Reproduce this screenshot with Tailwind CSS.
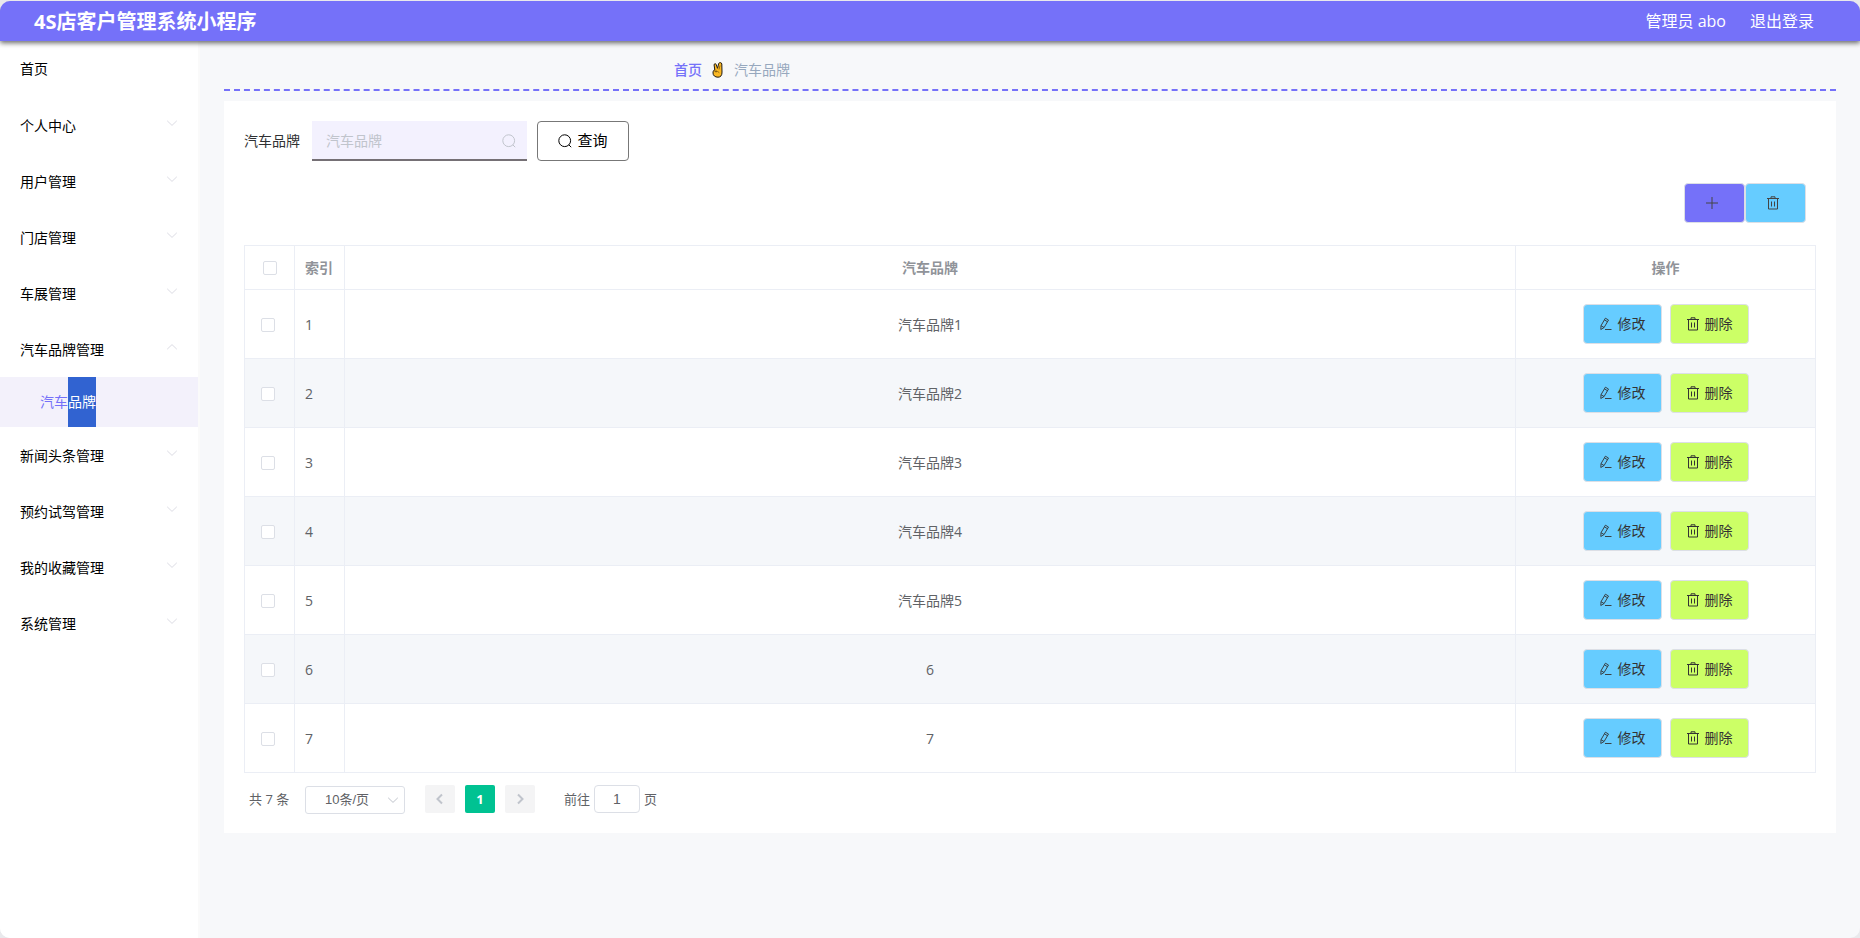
<!DOCTYPE html>
<html lang="zh-CN">
<head>
<meta charset="utf-8">
<title>4S店客户管理系统小程序</title>
<script src="https://cdn.jsdelivr.net/npm/@tailwindcss/browser@4"></script>
</head>
<body class="bg-[#e9e9ec] pt-px font-['Open_Sans','Noto_Sans_CJK_SC',sans-serif] text-sm text-[#606266]">
<svg class="hidden" aria-hidden="true">
  <symbol id="i-down" viewBox="0 0 14 14"><path d="M2.2 4.8 7 9.4l4.8-4.6" fill="none" stroke="currentColor"/></symbol>
  <symbol id="i-up" viewBox="0 0 14 14"><path d="M2.2 9.2 7 4.6l4.8 4.6" fill="none" stroke="currentColor"/></symbol>
  <symbol id="i-search" viewBox="0 0 14 14"><circle cx="6.700" cy="6.700" r="5.900" fill="none" stroke="currentColor"/><path d="m10.800 10.800 2.400 2.400" fill="none" stroke="currentColor"/></symbol>
  <symbol id="i-plus" viewBox="0 0 14 14"><path d="M7 1v12M1 7h12" fill="none" stroke="currentColor"/></symbol>
  <symbol id="i-trash" viewBox="0 0 14 14"><path d="M1 2.500h12M2.500 2.500v10.500h9v-10.500M5 2.500v-1.700h4v1.700M5.500 5.500v5M8.500 5.500v5" fill="none" stroke="currentColor"/></symbol>
  <symbol id="i-edit" viewBox="0 0 14 14"><path d="M6 12.500h6.500M1.800 12.500 2 8.700 6.400 1.200 9.500 3 5.100 10.500ZM2 8.700 5.100 10.500M5.400 2.900l3.100 1.800" fill="none" stroke="currentColor" stroke-width=".9"/></symbol>
</svg>

<div class="flex min-h-[calc(100vh-1px)] flex-col overflow-hidden rounded-[10px] bg-[#f7f8fa]">
  <header class="z-10 flex h-10 shrink-0 items-center justify-between bg-[#7571f9] pr-[46px] pl-[34px] text-white shadow-[0_2px_5px_rgba(0,0,0,0.6)]">
    <h1 class="pt-0.5 text-xl font-bold">4S店客户管理系统小程序</h1>
    <div class="flex gap-6 text-base leading-10">
      <span>管理员 abo</span>
      <a href="#">退出登录</a>
    </div>
  </header>

  <div class="flex flex-1">
    <nav class="w-[200px] shrink-0 border-r-2 border-[#fafafa] bg-white text-black" aria-label="主菜单">
      <a href="#" class="flex h-14 items-center px-5">首页</a>
      <ul id="menu"></ul>
    </nav>

    <main class="min-w-0 flex-1 px-6">
      <nav class="flex h-[50px] items-center border-b-2 border-dashed border-[#7571f9] pt-2.5 pl-[450px]" aria-label="面包屑">
        <a href="#" class="font-medium text-[#7571f9]">首页</a>
        <svg class="mx-2 size-4" viewBox="0 0 16 16" aria-hidden="true">
          <path d="M4.800 8 4.100 3C4 1.500 5.800 1.200 6.200 2.500L7.500 6.300 8.700 1.500C9.100.2 11.700.3 11.800 2L12 10C12.200 13.500 10.500 15.200 8 15.200 5 15.200 3 13.500 3 11 3 9.200 3.500 8 4.800 8Z" fill="#fbb823" stroke="#1f1a14"/>
          <path d="M4.500 9.500h3.200l1.600 1.200M6 8v2.500M10 3.500 9 7.500" fill="none" stroke="#6b4a10" stroke-width=".7"/>
        </svg>
        <span class="text-[#97a8be]">汽车品牌</span>
      </nav>

      <section class="mt-2.5 bg-white p-5">
        <form class="flex items-center">
          <label for="brand" class="mr-3 text-[#303133]">汽车品牌</label>
          <div class="relative mr-2.5">
            <input id="brand" type="text" placeholder="汽车品牌" class="block h-10 w-[215px] border-b-2 border-[#757075] bg-[#f3f1fe] pr-8 pl-3.5 outline-none placeholder:text-[#c0c4cc]">
            <svg class="absolute top-[13px] right-[11px] size-3.5 text-[#c0c4cc]"><use href="#i-search"/></svg>
          </div>
          <button type="button" class="flex h-10 w-[92px] items-center justify-center gap-[5px] rounded border border-[#777] text-[15px] text-black"><svg class="size-3.5"><use href="#i-search"/></svg>查询</button>
        </form>

        <div class="mt-[22px] mr-2.5 flex justify-end">
          <button type="button" aria-label="新增" class="flex h-10 w-[61px] items-center rounded border border-[#dcdfe6] bg-[#7571f9] pl-5 text-[#444]"><svg class="size-3.5"><use href="#i-plus"/></svg></button>
          <button type="button" aria-label="批量删除" class="flex h-10 w-[61px] items-center rounded border border-[#dcdfe6] bg-[#66ccff] pl-5 text-[#444]"><svg class="size-3.5"><use href="#i-trash"/></svg></button>
        </div>

        <table class="mt-[22px] w-full table-fixed border-separate border-spacing-0 border-t border-l border-[#ebeef5]">
          <colgroup><col class="w-[50px]"><col class="w-[50px]"><col><col class="w-[300px]"></colgroup>
          <thead>
            <tr class="h-11 text-[#909399]">
              <th class="border-r border-b border-[#ebeef5] pl-[18px]"><input type="checkbox" aria-label="全选" class="block size-3.5 appearance-none rounded-xs border border-[#dcdfe6] bg-white"></th>
              <th class="border-r border-b border-[#ebeef5] pl-2.5 text-left">索引</th>
              <th class="border-r border-b border-[#ebeef5]">汽车品牌</th>
              <th class="border-r border-b border-[#ebeef5]">操作</th>
            </tr>
          </thead>
          <tbody id="rows"></tbody>
        </table>

        <div class="mt-3 flex h-7 items-center pl-[5px] text-[13px]">
          <span class="w-14">共 7 条</span>
          <div class="relative mt-0.5 mr-5">
            <select aria-label="每页条数" class="block h-7 w-[100px] appearance-none rounded-[3px] border border-[#dcdfe6] bg-white pr-[25px] pl-[9px] text-center font-['Liberation_Sans','Noto_Sans_CJK_SC',sans-serif] outline-none"><option>10条/页</option></select>
            <svg class="pointer-events-none absolute top-[7px] right-[5px] size-3.5 text-[#c0c4cc]"><use href="#i-down"/></svg>
          </div>
          <div class="mr-[29px] flex gap-2.5">
            <button type="button" aria-label="上一页" class="flex h-7 w-[30px] items-center justify-center rounded-xs bg-[#f4f4f5] text-[#c0c4cc]"><svg class="size-3" viewBox="0 0 12 12"><path d="M8 1.500 3.500 6l4.500 4.500" fill="none" stroke="currentColor" stroke-width="2"/></svg></button>
            <button type="button" class="h-7 w-[30px] rounded-xs bg-[#00c292] font-bold text-white">1</button>
            <button type="button" aria-label="下一页" class="flex h-7 w-[30px] items-center justify-center rounded-xs bg-[#f4f4f5] text-[#c0c4cc]"><svg class="size-3" viewBox="0 0 12 12"><path d="m4 1.500 4.500 4.500-4.500 4.500" fill="none" stroke="currentColor" stroke-width="2"/></svg></button>
          </div>
          <label for="page" class="mr-1">前往</label>
          <input id="page" type="text" value="1" class="mr-1 h-7 w-[46px] rounded-[4px] border border-[#dcdfe6] text-center font-['Liberation_Sans',sans-serif] text-sm outline-none">
          <span>页</span>
        </div>
      </section>
    </main>
  </div>
</div>

<script>
const menu = ['个人中心', '用户管理', '门店管理', '车展管理', '汽车品牌管理', '新闻头条管理', '预约试驾管理', '我的收藏管理', '系统管理'];
document.getElementById('menu').innerHTML = menu.map(name => {
  const open = name === '汽车品牌管理';
  return `<li><button type="button" aria-expanded="${open}" class="flex h-14 w-full items-center justify-between pt-0.5 pr-[19px] pl-5">${name}<svg class="mb-1.5 size-3.5 text-[#dcdce4]"><use href="#${open ? 'i-up' : 'i-down'}"/></svg></button>` +
    (open ? `<a href="#" class="flex h-[50px] bg-[#f3f1fb] pl-10 leading-[50px] text-[#7571f9]">汽车<mark class="bg-[#3163d1] text-white">品牌</mark></a>` : '') + `</li>`;
}).join('');

const brands = ['汽车品牌1', '汽车品牌2', '汽车品牌3', '汽车品牌4', '汽车品牌5', '6', '7'];
document.getElementById('rows').innerHTML = brands.map((brand, i) => `
  <tr class="h-[69px] even:bg-[#f5f7fa]">
    <td class="border-r border-b border-[#ebeef5] pt-0.5 pl-4"><input type="checkbox" aria-label="选择第${i + 1}行" class="block size-3.5 appearance-none rounded-xs border border-[#dcdfe6] bg-white"></td>
    <td class="border-r border-b border-[#ebeef5] pt-0.5 pl-2.5">${i + 1}</td>
    <td class="border-r border-b border-[#ebeef5] pt-0.5 text-center">${brand}</td>
    <td class="border-r border-b border-[#ebeef5]"><div class="flex justify-center gap-2 text-[#333]">
      <button type="button" class="flex h-10 items-center gap-[5px] rounded border border-[#dcdfe6] bg-[#66ccff] px-[15px]"><svg class="size-3.5"><use href="#i-edit"/></svg>修改</button>
      <button type="button" class="flex h-10 items-center gap-[5px] rounded border border-[#dcdfe6] bg-[#ccff66] px-[15px]"><svg class="size-3.5"><use href="#i-trash"/></svg>删除</button>
    </div></td>
  </tr>`).join('');
</script>
</body>
</html>
